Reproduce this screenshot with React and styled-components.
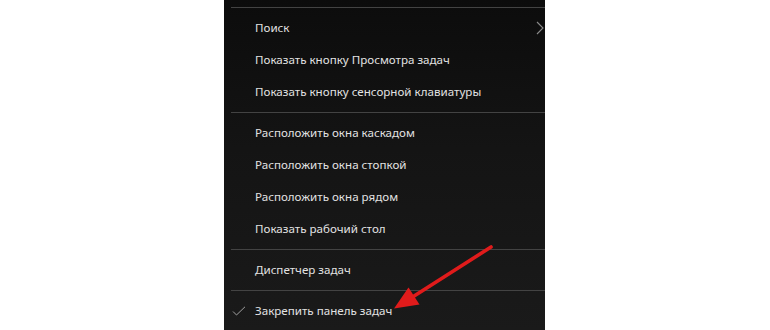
import styled, { createGlobalStyle } from 'styled-components'

const GlobalStyle = createGlobalStyle`
    html, body {
        margin: 0;
        padding: 0;
        background: #ffffff;
    }
    body {
        font-family: "Noto Sans", "Open Sans", sans-serif;
    }
`

const Page = styled.div`
    position: relative;
    width: 770px;
    height: 330px;
    overflow: hidden;
    display: flex;
    padding-left: 224px;
    box-sizing: border-box;
`

const Panel = styled.div`
    width: 321px;
    height: 330px;
    background: linear-gradient(180deg, #0c0c0c 0%, #141414 45%, #1a1a1a 100%);
    display: flex;
    flex-direction: column;
    overflow: hidden;
`

const CutTop = styled.div`
    height: 7px;
    flex: none;
`

const Separator = styled.div`
    height: 1px;
    margin-left: 7px;
    background: #434343;
    flex: none;
`

const Group = styled.div`
    padding: 4px 0;
    display: flex;
    flex-direction: column;
`

const Item = styled.div`
    position: relative;
    height: 32px;
    display: flex;
    align-items: center;
    padding-left: 31px;
    color: #e2e2e2;
    font-size: 11.6px;
    white-space: nowrap;
    padding-bottom: 1px;
    box-sizing: border-box;
`

const Check = styled.svg`
    position: absolute;
    left: 8px;
    top: 11px;
`

const Chevron = styled.svg`
    position: absolute;
    right: 1px;
    top: 9px;
`

const Arrow = styled.svg`
    position: absolute;
    left: 0;
    top: 0;
    pointer-events: none;
`

const groups = [
    [
        { label: 'Поиск', submenu: true },
        { label: 'Показать кнопку Просмотра задач' },
        { label: 'Показать кнопку сенсорной клавиатуры' },
    ],
    [
        { label: 'Расположить окна каскадом' },
        { label: 'Расположить окна стопкой' },
        { label: 'Расположить окна рядом' },
        { label: 'Показать рабочий стол' },
    ],
    [{ label: 'Диспетчер задач' }],
    [{ label: 'Закрепить панель задач', checked: true }],
]

const MenuItem = ({ label, submenu, checked }) => (
    <Item>
        {checked && (
            <Check width="14" height="10" viewBox="0 0 14 10">
                <path d="M1 5.5 L4.5 9 L13 0.8" fill="none" stroke="#a0a0a0" strokeWidth="1" />
            </Check>
        )}
        {label}
        {submenu && (
            <Chevron width="8" height="14" viewBox="0 0 8 14">
                <path d="M1 1 L7 7 L1 13" fill="none" stroke="#8a8a8a" strokeWidth="1.1" />
            </Chevron>
        )}
    </Item>
)

const App = () => (
    <>
        <GlobalStyle />
        <Page>
            <Panel>
                <CutTop />
                {groups.map((items, i) => (
                    <div key={i}>
                        <Separator />
                        <Group>
                            {items.map((it) => (
                                <MenuItem key={it.label} {...it} />
                            ))}
                        </Group>
                    </div>
                ))}
            </Panel>
            <Arrow width="770" height="330" viewBox="0 0 770 330">
                <line x1="491" y1="247" x2="411" y2="298" stroke="#e01b1b" strokeWidth="3.6" strokeLinecap="round" />
                <polygon points="394,308.5 419.5,304.5 408.5,287.5" fill="#e01b1b" />
            </Arrow>
        </Page>
    </>
)

export default App
